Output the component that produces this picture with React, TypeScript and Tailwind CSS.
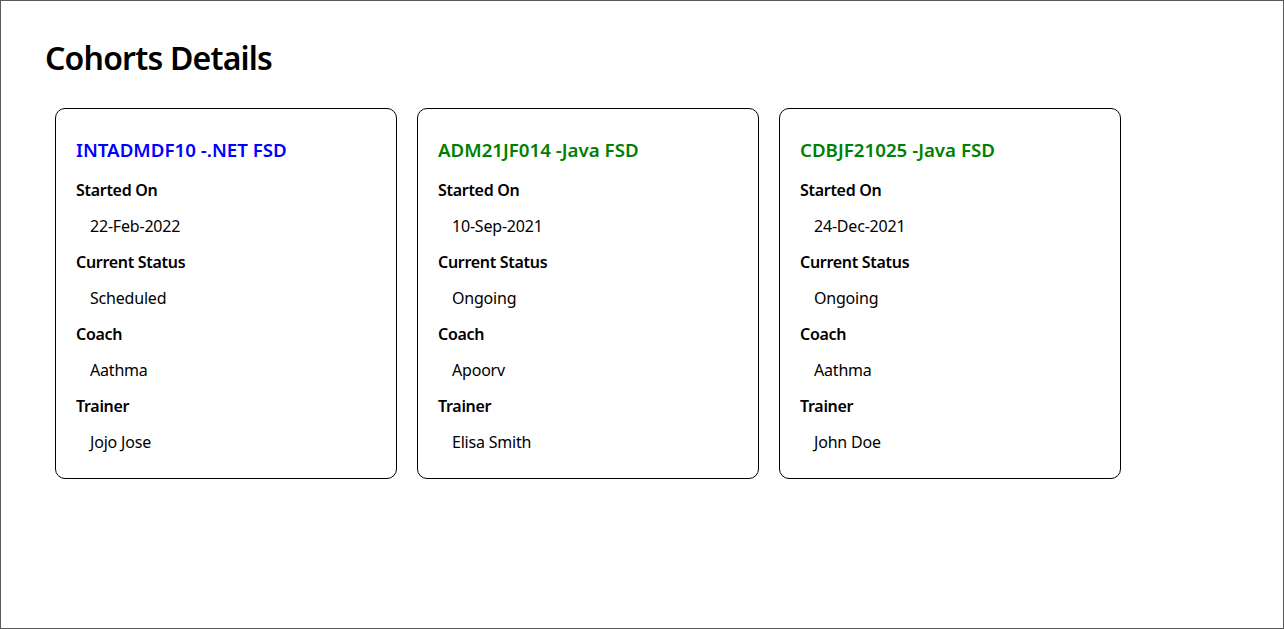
import React from "react";

type Cohort = {
  code: string;
  color: string;
  started: string;
  status: string;
  coach: string;
  trainer: string;
};

const cohorts: Cohort[] = [
  { code: "INTADMDF10 -.NET FSD", color: "text-[#0000ff]", started: "22-Feb-2022", status: "Scheduled", coach: "Aathma", trainer: "Jojo Jose" },
  { code: "ADM21JF014 -Java FSD", color: "text-[#008000]", started: "10-Sep-2021", status: "Ongoing", coach: "Apoorv", trainer: "Elisa Smith" },
  { code: "CDBJF21025 -Java FSD", color: "text-[#008000]", started: "24-Dec-2021", status: "Ongoing", coach: "Aathma", trainer: "John Doe" },
];

function Card({ c }: { c: Cohort }) {
  const rows: [string, string][] = [
    ["Started On", c.started],
    ["Current Status", c.status],
    ["Coach", c.coach],
    ["Trainer", c.trainer],
  ];
  return (
    <div className="w-[342px] rounded-[10px] border border-black pl-[20px] pr-[20px] pt-[29px] pb-[18px]">
      <h3 className={`text-[18.72px] font-semibold leading-[24px] ${c.color}`}>{c.code}</h3>
      <dl className="mt-[10px]">
        {rows.map(([k, v]) => (
          <React.Fragment key={k}>
            <dt className="text-[16px] font-semibold leading-[36px] tracking-[-0.3px] text-black">{k}</dt>
            <dd className="pl-[14px] text-[16px] leading-[36px] tracking-[-0.2px] text-black">{v}</dd>
          </React.Fragment>
        ))}
      </dl>
    </div>
  );
}

export default function App() {
  return (
    <div
      className="h-[629px] w-[1284px] border border-[#5a5a5a] bg-white"
      style={{ fontFamily: '"Noto Sans", sans-serif' }}
    >
      <h1 className="pl-[44px] pt-[37px] text-[32px] font-semibold leading-[40px] tracking-[-0.8px] text-black">Cohorts Details</h1>
      <div className="mt-[30px] flex gap-[20px] pl-[54px]">
        {cohorts.map((c) => (
          <Card key={c.code} c={c} />
        ))}
      </div>
    </div>
  );
}
